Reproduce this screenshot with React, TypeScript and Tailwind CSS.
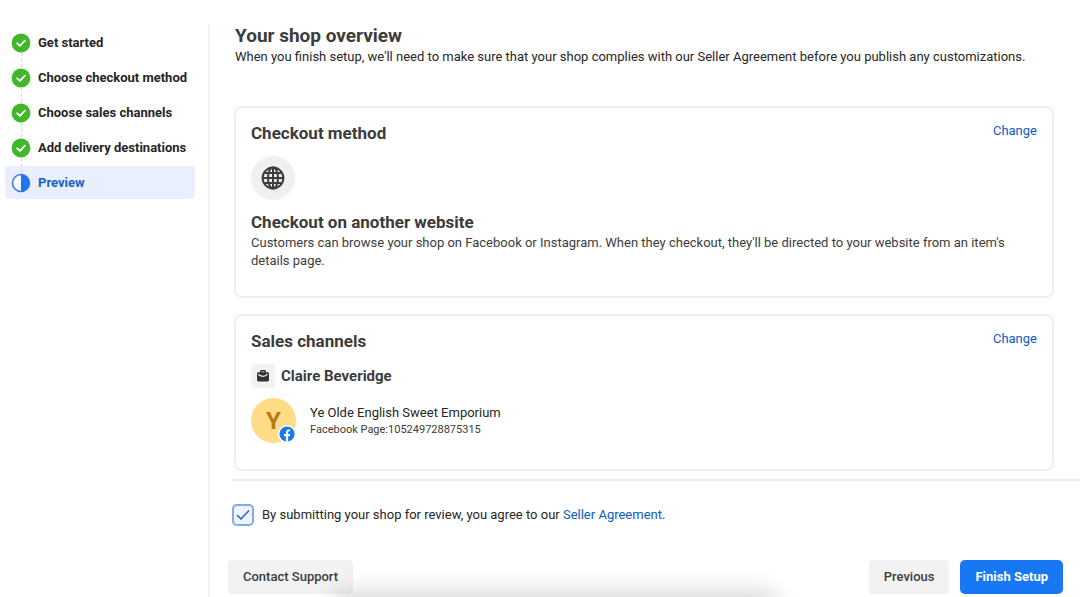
import { useState } from "react";

const steps = ["Get started", "Choose checkout method", "Choose sales channels", "Add delivery destinations"];

function StepDone() {
  return (
    <svg viewBox="0 0 20 20" className="size-5 shrink-0" aria-hidden="true">
      <circle cx="10" cy="10" r="9.4" fill="#42b72a" />
      <path d="M6.2 10.3l2.7 2.6 5-5.2" fill="none" stroke="#fff" strokeWidth="1.8" strokeLinecap="round" strokeLinejoin="round" />
    </svg>
  );
}

function StepCurrent() {
  return (
    <svg viewBox="0 0 20 20" className="size-5 shrink-0" aria-hidden="true">
      <circle cx="10" cy="10" r="8.5" fill="#f4f8ff" stroke="#3578e5" strokeWidth="1.5" />
      <path d="M10 1.5a8.5 8.5 0 0 1 0 17z" fill="#2374f2" />
    </svg>
  );
}

function Globe() {
  return (
    <svg viewBox="0 0 24 24" className="size-6" fill="none" stroke="#3c3c3c" strokeWidth="2" aria-hidden="true">
      <circle cx="12" cy="12" r="10.4" />
      <ellipse cx="12" cy="12" rx="5" ry="10.4" />
      <path d="M12 1.6v20.8M1.6 12h20.8M3.2 7h17.6M3.2 17h17.6" />
    </svg>
  );
}

function Briefcase() {
  return (
    <svg viewBox="0 0 14 14" className="size-[14px]" aria-hidden="true">
      <path d="M4.7 4V2.5c0-.4.3-.7.7-.7h3.2c.4 0 .7.3.7.7V4" fill="none" stroke="#333" strokeWidth="1.4" />
      <rect x="1" y="3.2" width="12" height="9.2" rx="1.3" fill="#333" />
      <path d="M2.8 5.8c1.200.9 2.600 1.500 4.200 1.500s3-.6 4.200-1.900" fill="none" stroke="#f2f2f2" strokeWidth="1.300" strokeLinecap="round" />
    </svg>
  );
}

function FacebookBadge() {
  return (
    <svg viewBox="0 0 18 18" className="absolute right-0 bottom-0 size-[18px]" aria-hidden="true">
      <circle cx="9" cy="9" r="9" fill="#fff" />
      <circle cx="9" cy="9" r="7.6" fill="#1877f2" />
      <path d="M7.9 16.6v-5.4H6V9h1.9V7.3c0-1.9 1.100-2.900 2.800-2.900.8 0 1.500.1 1.500.1v1.800h-.9c-.9 0-1.200.6-1.200 1.200V9h2l-.3 2.200h-1.700v5.400z" fill="#fff" />
    </svg>
  );
}

function Card({ title, children }: { title: string; children: React.ReactNode }) {
  return (
    <section className="rounded-lg border-2 border-[#f0f0f1] px-[15px] pt-[13px] pb-[26px]">
      <div className="flex items-start justify-between">
        <h2 className="text-[17px] leading-6 font-bold">{title}</h2>
        <a href="#change" className="text-[13px] leading-5 text-[#0b5cc4]">Change</a>
      </div>
      {children}
    </section>
  );
}

export default function App() {
  const [agreed, setAgreed] = useState(true);
  return (
    <div className="relative flex h-screen overflow-hidden bg-white font-[Roboto,sans-serif] text-[#3c3c3c]">
      <nav aria-label="Setup steps" className="mt-6 w-[210px] shrink-0 border-r-2 border-[#f3f3f3] pt-[2px] pr-[13px] pl-[5px]">
        <ol className="flex flex-col gap-[2px] text-[13px] font-bold text-[#262626]">
          {steps.map((step) => (
            <li key={step} className="relative flex h-[33px] items-center gap-[7px] px-[6px]">
              <span className="absolute top-[27px] left-4 h-[14px] border-l border-dashed border-[#d5d6da]" />
              <StepDone />
              {step}
            </li>
          ))}
          <li aria-current="step" className="flex h-[33px] items-center gap-[7px] rounded-sm bg-[#e9effe] px-[6px] text-[#1864c8]">
            <StepCurrent />
            Preview
          </li>
        </ol>
      </nav>

      <div className="flex min-w-0 flex-1 flex-col pt-6">
        <main className="pr-[26px] pl-6">
          <header className="h-[82px] pl-px">
            <h1 className="text-[19px] leading-6 font-bold">Your shop overview</h1>
            <p className="text-[13px] leading-[18px] text-[#262626]">
              When you finish setup, we'll need to make sure that your shop complies with our Seller Agreement before you publish any customizations.
            </p>
          </header>

          <div className="flex flex-col gap-4">
            <Card title="Checkout method">
              <div className="mt-[11px] flex size-11 items-center justify-center rounded-full bg-[#f0f0f0]">
                <Globe />
              </div>
              <h3 className="mt-[10px] text-[17px] leading-6 font-bold">Checkout on another website</h3>
              <p className="text-[13px] leading-[18px]">
                Customers can browse your shop on Facebook or Instagram. When they checkout, they'll be directed to your website from an item's details page.
              </p>
            </Card>

            <Card title="Sales channels">
              <div className="mt-[11px] flex items-center gap-[6px]">
                <span className="flex size-6 items-center justify-center rounded-sm bg-[#f2f2f2]">
                  <Briefcase />
                </span>
                <h3 className="text-[15px] leading-6 font-bold">Claire Beveridge</h3>
              </div>
              <div className="mt-[10px] flex items-center gap-[14px]">
                <div className="relative flex size-[45px] items-center justify-center rounded-full bg-[#ffdc85] text-2xl font-bold text-[#b87818]">
                  Y
                  <FacebookBadge />
                </div>
                <div>
                  <p className="text-[13px] leading-[18px] text-[#262626]">Ye Olde English Sweet Emporium</p>
                  <p className="text-[11px] leading-4">Facebook Page:105249728875315</p>
                </div>
              </div>
            </Card>
          </div>
        </main>

        <footer className="mt-2 pl-[18px]">
          <div className="ml-1 border-t-2 border-[#ebebec] pt-[23px]">
            <div className="flex items-center gap-2 text-[13px] text-[#262626]">
              <span className="relative flex size-[22px]">
                <input
                  id="agree"
                  type="checkbox"
                  checked={agreed}
                  onChange={(event) => setAgreed(event.target.checked)}
                  className="size-[22px] appearance-none rounded-[5px] border-2 border-[#83a9e8] bg-[#edf4ff]"
                />
                {agreed && (
                  <svg viewBox="0 0 22 22" className="pointer-events-none absolute inset-0" aria-hidden="true">
                    <path d="M5.5 11.5l3.5 3.5 7.5-8" fill="none" stroke="#3268c5" strokeWidth="1.7" strokeLinecap="round" strokeLinejoin="round" />
                  </svg>
                )}
              </span>
              <label htmlFor="agree">
                By submitting your shop for review, you agree to our <a href="#agreement" className="text-[#0b5cc4]">Seller Agreement</a>.
              </label>
            </div>
          </div>
          <div className="mt-[34px] flex gap-[11px] pr-[17px] text-[13px] font-medium">
            <button type="button" className="mr-auto h-[34px] rounded-sm bg-[#f2f2f2] px-[15px]">Contact Support</button>
            <button type="button" className="h-[34px] rounded-sm bg-[#f2f2f2] px-[15px]">Previous</button>
            <button type="button" className="h-[34px] rounded-[5px] bg-[#1877f2] px-[15px] font-bold text-white">Finish Setup</button>
          </div>
        </footer>
      </div>

      <div className="pointer-events-none absolute right-[310px] -bottom-4 left-[340px] h-3 rounded-full shadow-[0_0_24px_8px_rgba(0,0,0,0.18)]" />
    </div>
  );
}
